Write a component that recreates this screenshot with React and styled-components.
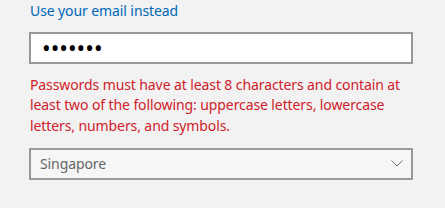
import React from "react";
import styled, { createGlobalStyle } from "styled-components";

const GlobalStyle = createGlobalStyle`
  html, body {
    margin: 0;
    padding: 0;
    background: #f2f2f2;
  }
  body {
    font-family: "Noto Sans", "Segoe UI", sans-serif;
    font-size: 14px;
    letter-spacing: -0.1px;
  }
`;

const Form = styled.div`
  width: 384px;
  padding-left: 29px;
  display: flex;
  flex-direction: column;
`;

const Link = styled.a`
  color: #0067b8;
  line-height: 21px;
  padding-left: 1px;
  text-decoration: none;
  cursor: pointer;
`;

const Field = styled.input`
  box-sizing: border-box;
  height: 32px;
  margin-top: 11px;
  border: 2px solid #999999;
  background: #ffffff;
  padding: 0 11px;
  font-family: "Noto Sans", sans-serif;
  font-size: 23px;
  letter-spacing: 0;
  color: #000;
  outline: none;
`;

const ErrorText = styled.p`
  margin: 11px 0 0;
  padding-left: 1px;
  color: #d0202a;
  line-height: 20.3px;
`;

const SelectBox = styled.div`
  box-sizing: border-box;
  height: 32px;
  margin-top: 12px;
  border: 2px solid #999999;
  background: #f6f6f6;
  display: flex;
  align-items: center;
  justify-content: space-between;
  padding: 0 8px 0 9px;
  color: #666666;
`;

const Chevron = () => (
  <svg width="12" height="7" viewBox="0 0 12 7">
    <path d="M0.5 0.5 L6 6 L11.5 0.5" fill="none" stroke="#707070" strokeWidth="1" />
  </svg>
);

export default function App() {
  return (
    <>
      <GlobalStyle />
      <Form>
        <Link>Use your email instead</Link>
        <Field type="password" defaultValue="1234567" readOnly />
        <ErrorText>
          Passwords must have at least 8 characters and contain at least two
          of the following: uppercase letters, lowercase letters, numbers, and
          symbols.
        </ErrorText>
        <SelectBox>
          <span>Singapore</span>
          <Chevron />
        </SelectBox>
      </Form>
    </>
  );
}
